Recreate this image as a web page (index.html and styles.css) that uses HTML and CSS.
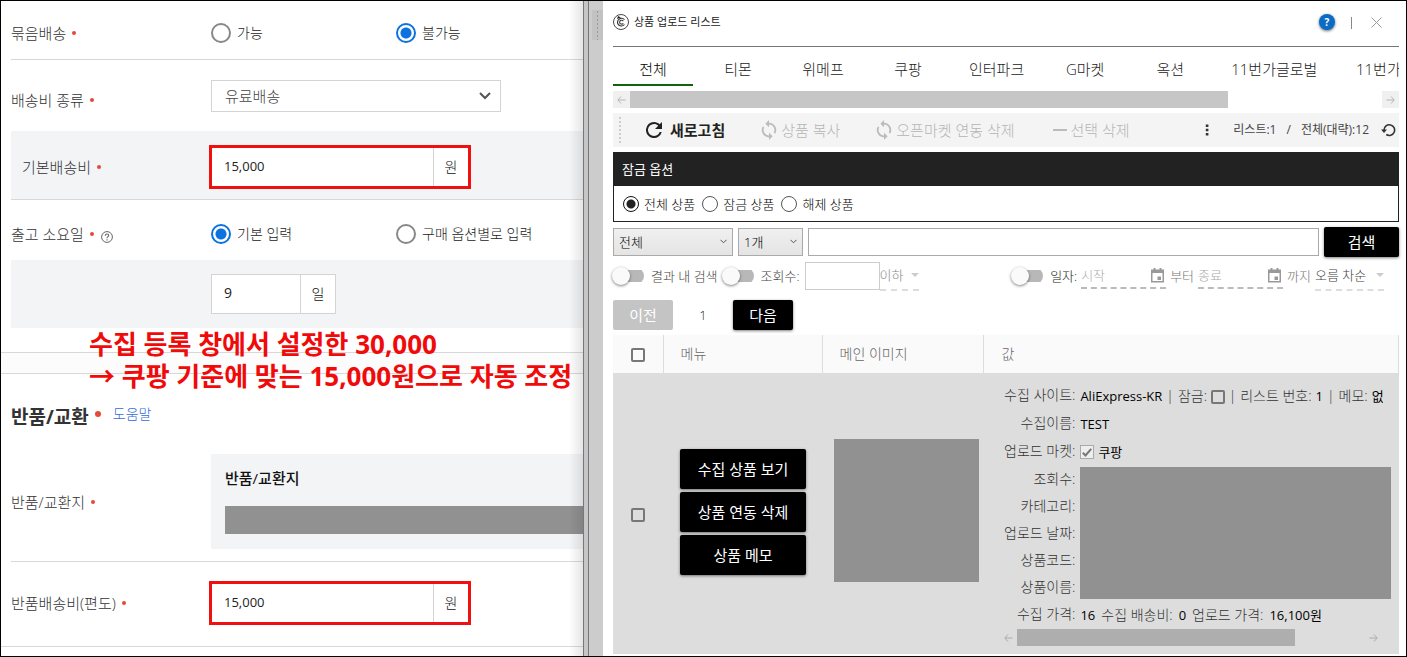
FILE: index.html
```html
<!DOCTYPE html>
<html lang="ko">
<head>
<meta charset="utf-8">
<title>상품 업로드 리스트</title>
<link rel="stylesheet" href="styles.css">
</head>
<body>
<div class="frame">
  <main class="form">
    <div class="row row-bundle">
      <div class="label">묶음배송<i class="dot"></i></div>
      <div class="options">
        <label class="option"><input type="radio" class="radio" name="bundle"><span>가능</span></label>
        <label class="option"><input type="radio" class="radio" name="bundle" checked><span>불가능</span></label>
      </div>
    </div>
    <div class="row row-kind">
      <label class="label" for="kind">배송비 종류<i class="dot"></i></label>
      <div class="kind">
        <select id="kind" class="kind-select"><option>유료배송</option></select>
        <svg class="kind-arrow" width="14" height="10" viewBox="0 0 14 10"><path d="M2 2l5 5 5-5" fill="none" stroke="#555" stroke-width="2"/></svg>
      </div>
    </div>
    <div class="row row-fee">
      <label class="label" for="fee">기본배송비<i class="dot"></i></label>
      <div class="amount marked"><input id="fee" type="text" value="15,000"><span>원</span></div>
    </div>
    <div class="row row-days">
      <div class="label">출고 소요일<i class="dot"></i>
        <svg class="help" width="12" height="12" viewBox="0 0 12 12"><circle cx="6" cy="6" r="5.4" fill="none" stroke="#666"/><path d="M4.3 4.7c0-2.3 3.5-2.2 3.4-.1C7.700 5.700 6 5.700 6 7.200M6 8.200v1.200" fill="none" stroke="#666" stroke-width="1.100"/></svg>
      </div>
      <div class="options">
        <label class="option"><input type="radio" class="radio" name="days" checked><span>기본 입력</span></label>
        <label class="option"><input type="radio" class="radio" name="days"><span>구매 옵션별로 입력</span></label>
      </div>
    </div>
    <div class="row row-count">
      <div class="label"></div>
      <div class="amount short"><input type="text" value="9" aria-label="출고 소요일"><span>일</span></div>
    </div>
    <div class="divider"></div>
    <h2 class="heading">반품/교환<i class="dot big"></i><a href="#">도움말</a></h2>
    <div class="row row-address">
      <div class="label">반품/교환지<i class="dot"></i></div>
      <div class="address"><h3>반품/교환지</h3><div class="mask"></div></div>
    </div>
    <div class="row row-return">
      <label class="label" for="ret">반품배송비(편도)<i class="dot"></i></label>
      <div class="amount marked"><input id="ret" type="text" value="15,000"><span>원</span></div>
    </div>
    <p class="note">수집 등록 창에서 설정한 30,000<br>→ 쿠팡 기준에 맞는 15,000원으로 자동 조정</p>
    <div class="edge-shadow"></div>
  </main>

  <div class="splitter"><div class="rail"></div><div class="grip"></div></div>

  <section class="list">
    <header class="title-bar">
      <svg width="16" height="16" viewBox="0 0 16 16" fill="none" stroke="#333"><circle cx="8" cy="8" r="7.500" stroke-width=".9"/><path d="M11.500 5.600C9.500 3.300 5 4 4.500 8c0 4.300 4.800 5 7 2.500M10.300 7C9 5.700 6.700 6.100 6.600 8.200c.1 2.200 2.600 2.400 3.700 1.100" stroke-width="1.100"/><path d="M4 5l1-3 3 1.500z" fill="#222" stroke="none"/></svg>
      <h1>상품 업로드 리스트</h1>
      <button class="info" aria-label="도움말">?</button>
      <span class="bar"></span>
      <button class="close" aria-label="닫기"><svg width="11" height="11" viewBox="0 0 11 11"><path d="M.5.5l10 10M10.500.5l-10 10" stroke="#999" fill="none"/></svg></button>
    </header>
    <nav class="tabs">
      <button class="tab active">전체</button><button class="tab">티몬</button><button class="tab">위메프</button><button class="tab">쿠팡</button><button class="tab">인터파크</button><button class="tab">G마켓</button><button class="tab">옥션</button><button class="tab">11번가글로벌</button><button class="tab">11번가</button>
    </nav>
    <div class="scroll">
      <button aria-label="왼쪽"><svg width="9" height="8" viewBox="0 0 9 8"><path d="M4 .5L.8 4 4 7.500M1 4h7.500" stroke="#b4b4b4" fill="none"/></svg></button>
      <div class="track"><div class="thumb"></div></div>
      <button aria-label="오른쪽"><svg width="9" height="8" viewBox="0 0 9 8"><path d="M5 .5L8.200 4 5 7.500M8 4H.5" stroke="#b4b4b4" fill="none"/></svg></button>
    </div>
    <div class="toolbar">
      <i class="dots"></i>
      <button class="tool refresh"><svg width="16" height="16" viewBox="4 4 16 16"><path fill="#222" d="M17.650 6.350C16.200 4.900 14.210 4 12 4a8 8 0 1 0 7.730 10h-2.080A6 6 0 1 1 12 6c1.660 0 3.140.690 4.220 1.780L13 11h7V4z"/></svg>새로고침</button>
      <button class="tool copy" disabled><svg width="16" height="20" viewBox="4 1 16 22"><path fill="#bbb" d="M12 4V1L8 5l4 4V6a6 6 0 0 1 5.250 8.800l1.460 1.460A8 8 0 0 0 12 4zm0 14a6 6 0 0 1-5.250-8.800L5.290 7.740A8 8 0 0 0 12 20v3l4-4-4-4z"/></svg>상품 복사</button>
      <button class="tool market" disabled><svg width="16" height="20" viewBox="4 1 16 22"><path fill="#bbb" d="M12 4V1L8 5l4 4V6a6 6 0 0 1 5.250 8.800l1.460 1.460A8 8 0 0 0 12 4zm0 14a6 6 0 0 1-5.250-8.800L5.290 7.740A8 8 0 0 0 12 20v3l4-4-4-4z"/></svg>오픈마켓 연동 삭제</button>
      <button class="tool remove" disabled><svg width="14" height="4" viewBox="0 0 14 4"><path d="M0 2h14" stroke="#bbb" stroke-width="2"/></svg>선택 삭제</button>
      <button class="more" aria-label="더 보기"><svg width="4" height="12" viewBox="0 0 4 12"><path d="M.8.5h2.600v2.600H.8zM.8 4.700h2.600v2.600H.8zM.8 8.900h2.600v2.600H.8z" fill="#333"/></svg></button>
      <span class="count">리스트:1</span><span class="count slash">/</span><span class="count">전체(대략):12</span>
      <button class="reload" aria-label="다시 읽기"><svg width="15" height="14" viewBox="0 0 15 14"><path d="M3 7a5.300 5.300 0 1 1 2.300 4.500" fill="none" stroke="#333" stroke-width="1.600"/><path d="M0 6.500h6L3 10z" fill="#333"/></svg></button>
    </div>
    <fieldset class="lock">
      <legend>잠금 옵션</legend>
      <div class="lock-options">
        <label><input type="radio" class="radio dark" name="lock" checked>전체 상품</label>
        <label><input type="radio" class="radio dark" name="lock">잠금 상품</label>
        <label><input type="radio" class="radio dark" name="lock">해제 상품</label>
      </div>
    </fieldset>
    <div class="search">
      <div class="pick wide"><select aria-label="범위"><option>전체</option></select><svg width="7" height="5" viewBox="0 0 7 5"><path d="M.5.8l3 3 3-3" fill="none" stroke="#555"/></svg></div>
      <div class="pick"><select aria-label="개수"><option>1개</option></select><svg width="7" height="5" viewBox="0 0 7 5"><path d="M.5.8l3 3 3-3" fill="none" stroke="#555"/></svg></div>
      <input type="text" class="query" aria-label="검색어">
      <button class="solid go">검색</button>
    </div>
    <div class="filters">
      <label><input type="checkbox" class="toggle">결과 내 검색</label>
      <label><input type="checkbox" class="toggle">조회수:</label>
      <input type="text" class="views" aria-label="조회수">
      <div class="menu below"><select aria-label="조건" disabled><option>이하</option></select><i></i></div>
      <label class="date-toggle"><input type="checkbox" class="toggle">일자:</label>
      <div class="date"><input type="text" placeholder="시작" aria-label="시작"><svg width="13" height="15" viewBox="0 0 13 15"><path d="M2.500 0h2v1.500h4V0h2v1.500H13V14.500H0V1.500h2.500zM1.500 5v8h10V5z" fill="#999" fill-rule="evenodd"/><path d="M6.500 8.500h3.500v3.500H6.500z" fill="#999"/></svg></div>
      <span class="between">부터</span>
      <div class="date"><input type="text" placeholder="종료" aria-label="종료"><svg width="13" height="15" viewBox="0 0 13 15"><path d="M2.500 0h2v1.500h4V0h2v1.500H13V14.500H0V1.500h2.500zM1.500 5v8h10V5z" fill="#999" fill-rule="evenodd"/><path d="M6.500 8.500h3.500v3.500H6.500z" fill="#999"/></svg></div>
      <span class="between">까지</span>
      <div class="menu order"><select aria-label="정렬"><option>오름 차순</option></select><i></i></div>
    </div>
    <div class="pager"><button class="solid" disabled>이전</button><span>1</span><button class="solid">다음</button></div>
    <table class="grid">
      <colgroup><col class="c-check"><col class="c-menu"><col class="c-image"><col></colgroup>
      <thead><tr><th class="check"><input type="checkbox" class="box" aria-label="모두 선택"></th><th>메뉴</th><th>메인 이미지</th><th class="value-head">값</th></tr></thead>
      <tbody><tr>
        <td class="check"><input type="checkbox" class="box" aria-label="선택"></td>
        <td><div class="actions"><button class="solid">수집 상품 보기</button><button class="solid">상품 연동 삭제</button><button class="solid">상품 메모</button></div></td>
        <td><div class="picture"></div></td>
        <td class="value">
          <div class="details">
            <span class="key">수집 사이트:</span>
            <div class="line"><b>AliExpress-KR</b><span>|</span><label>잠금: <input type="checkbox" class="box"></label><span>|</span><span>리스트 번호:</span><b>1</b><span>|</span><span>메모:</span><b>없음</b></div>
            <span class="key">수집이름:</span><div class="line"><b>TEST</b></div>
            <span class="key">업로드 마켓:</span>
            <label class="line"><span class="tick"><input type="checkbox" checked disabled><svg width="10" height="9" viewBox="0 0 10 9"><path d="M.8 4.800l2.700 2.700L9.200.8" fill="none" stroke="#777" stroke-width="2"/></svg></span><b>쿠팡</b></label>
            <span class="key">조회수:</span><div class="hidden-values"></div>
            <span class="key">카테고리:</span><span class="key">업로드 날짜:</span><span class="key">상품코드:</span><span class="key">상품이름:</span>
            <span class="key">수집 가격:</span><div class="line price"><b>16</b><span>수집 배송비:</span><b>0</b><span>업로드 가격:</span><b>16,100원</b></div>
          </div>
          <div class="scroll inner">
            <button aria-label="왼쪽"><svg width="9" height="8" viewBox="0 0 9 8"><path d="M4 .5L.8 4 4 7.500M1 4h7.500" stroke="#aaa" fill="none"/></svg></button>
            <div class="track"><div class="thumb"></div></div>
            <button aria-label="오른쪽"><svg width="9" height="8" viewBox="0 0 9 8"><path d="M5 .5L8.200 4 5 7.500M8 4H.5" stroke="#aaa" fill="none"/></svg></button>
          </div>
        </td>
      </tr></tbody>
    </table>
  </section>
</div>
</body>
</html>
```
FILE: styles.css
```css
* { box-sizing: border-box; margin: 0; padding: 0; }
body { font: 300 15px/20px "Open Sans", "Noto Sans CJK KR", sans-serif; color: #222; background: #fff; }
button, input, select { font: inherit; color: inherit; border: 0; background: none; appearance: none; outline: 0; border-radius: 0; }
button { display: flex; align-items: center; justify-content: center; white-space: nowrap; }
svg { display: block; flex: none; }

.frame { display: grid; grid-template-columns: minmax(0, 582fr) 20px minmax(0, 803fr); min-height: 100vh; border: 1px solid #000; overflow: hidden; }

/* Shipping form */
.form { position: relative; padding-left: 10px; overflow: hidden; }
.row { display: flex; align-items: center; }
.label { display: flex; align-items: center; flex: none; width: 200px; color: #333; white-space: nowrap; }
.dot { width: 4px; height: 4px; margin-left: 6px; border-radius: 50%; background: #e14b3c; }
.dot.big { width: 6px; height: 6px; }
.help { margin: 6px 0 0 7px; }
.options { display: flex; font-size: 14px; }
.option { display: flex; align-items: center; gap: 6px; width: 185px; white-space: nowrap; }
.radio { flex: none; width: 20px; height: 20px; border: 2px solid #888; border-radius: 50%; background: #fff; }
.radio:checked { border-color: #0b72e0; background: radial-gradient(circle, #0b72e0 5px, #fff 6px); }

.row-bundle { height: 59px; padding-top: 5px; border-bottom: 1px solid #d8d8d8; }
.row-kind { height: 71px; }
.row-kind .label { padding-top: 8px; }
.kind { position: relative; width: 290px; }
.kind-select { display: block; width: 100%; height: 32px; padding: 0 13px; border: 1px solid #d4d4d4; background: #fff; color: #444; font-size: 15px; }
.kind-arrow { position: absolute; right: 9px; top: 11px; }
.row-fee { height: 69px; padding-top: 4px; background: #f2f4f6; border-bottom: 1px solid #d8d8d8; }
.row-fee .label { padding-left: 11px; }
.amount { display: flex; height: 40px; }
.amount input { width: 221px; padding: 0 12px 2px; background: #fff; font-size: 13px; font-weight: 400; color: #222; }
.amount span { display: flex; align-items: center; justify-content: center; width: 35px; background: #fff; border-left: 1px solid #d4d4d4; font-size: 14px; color: #111; }
.marked { height: 38px; margin-left: 1px; outline: 3px solid #f01010; }
.row-days { height: 60px; padding-top: 8px; }
.row-count { height: 68px; background: #f2f4f6; }
.short { border: 1px solid #d4d4d4; }
.short input { width: 88px; font-size: 14px; }
.divider { height: 22px; margin: 24px 0 0 -10px; background: #fcfcfc; border: solid #d8d8d8; border-width: 1px 0; }
.heading { display: flex; align-items: center; height: 80px; padding-top: 6px; font-size: 19px; font-weight: 700; color: #333; }
.heading .dot { margin-bottom: 6px; }
.heading a { margin: 0 0 6px 12px; font-size: 14px; font-weight: 300; color: #2f6bd8; text-decoration: none; }
.row-address { height: 108px; padding-bottom: 12px; border-bottom: 1px solid #d8d8d8; }
.address { flex: 1; height: 95px; padding: 14px 0 0 14px; background: #f2f4f6; }
.address h3 { font-size: 15px; line-height: 20px; font-weight: 500; color: #111; }
.mask { height: 28px; margin-top: 18px; background: #919191; }
.row-return { height: 85px; margin-left: -10px; padding: 0 0 2px 10px; border-bottom: 1px solid #d8d8d8; }
.note { position: absolute; left: 88px; top: 327px; font-size: 26px; line-height: 32px; font-weight: 700; color: #f00a0a; white-space: nowrap; }
.edge-shadow { position: absolute; top: 0; right: 0; bottom: 0; width: 14px; background: linear-gradient(90deg, transparent, rgba(0, 0, 0, .1)); }

/* Splitter */
.splitter { position: relative; display: flex; background: #ccc; }
.rail { width: 6px; background: #c6c6c6; border: solid #777; border-width: 0 1px; }
.grip { position: absolute; left: 9px; top: 9px; width: 11px; height: 30px; background: radial-gradient(circle, #999 1px, transparent 1px) 0 0 / 100% 4px #c2c2c2; }

/* Upload list */
.list { min-width: 0; padding: 0 7px 1px 10px; }
.title-bar { display: flex; align-items: center; height: 46px; padding-bottom: 3px; border-bottom: 1px solid #777; }
h1 { margin: 0 auto 0 5px; font-size: 11px; font-weight: 400; }
.info { width: 16px; height: 16px; border-radius: 50%; background: #0a6cc4; box-shadow: 0 1px 3px #666; color: #fff; font-size: 10px; font-weight: 700; }
.bar { width: 1px; height: 12px; margin: 2px 19px 0 16px; background: #888; }
.close { margin-right: 17px; }
.tabs { display: flex; gap: 5px; height: 39px; overflow: hidden; }
.tab { flex: none; min-width: 80px; padding: 7px 16px 0; border-bottom: 2px solid transparent; }
.tab.active { border-color: #0f6412; color: #000; }
.scroll { display: flex; height: 17px; margin-top: 5px; }
.scroll button { width: 17px; background: #f0f0f0; }
.track { flex: 1; }
.thumb { width: 79.500%; height: 100%; background: #c6c6c6; }
.toolbar { display: flex; align-items: center; height: 34px; margin-top: 5px; padding: 0 3px 0 6px; background: #f4f4f4; }
.dots { width: 2px; height: 26px; background: repeating-linear-gradient(#ccc 0 2px, transparent 2px 4px); }
.tool { gap: 4px; color: #b4b4b4; }
.refresh { gap: 8px; margin-left: 25px; color: #222; font-weight: 700; }
.copy { margin-left: 36px; }
.market { margin-left: 36px; }
.remove { margin-left: 38px; }
.more { margin: 0 24px 0 auto; }
.count { font-size: 12px; font-weight: 400; white-space: nowrap; color: #444; }
.slash { margin: 0 10px; }
.reload { margin-left: 12px; }
.lock { margin-top: 5px; border: 1px solid #222; }
.lock legend { float: left; width: 100%; height: 33px; padding: 0 8px; background: #222; color: #fff; font-size: 13px; line-height: 33px; font-weight: 400; }
.lock-options { clear: both; display: flex; gap: 7px; height: 35px; padding-left: 9px; font-size: 13px; color: #000; }
.lock-options label { display: flex; align-items: center; gap: 5px; white-space: nowrap; }
.radio.dark { width: 16px; height: 16px; border-width: 1px; border-color: #555; }
.radio.dark:checked { border-color: #111; background: radial-gradient(circle, #222 4px, #fff 5px); }
.search { display: flex; align-items: center; gap: 5px; margin-top: 5px; font-size: 13px; }
.pick { position: relative; width: 65px; }
.wide { width: 120px; }
.pick select { display: block; width: 100%; height: 28px; padding: 0 5px; border: 1px solid #aaa; background: linear-gradient(#f0f0f0, #e4e4e4); color: #000; }
.pick svg { position: absolute; right: 6px; top: 11px; }
.query { flex: 1; min-width: 0; height: 28px; border: 1px solid #aaa; }
.solid { height: 30px; border-radius: 2px; background: #000; box-shadow: 0 1px 3px rgba(0, 0, 0, .5); color: #fff; font-size: 15px; font-weight: 400; }
.solid:disabled { background: #c4c4c4; box-shadow: none; }
.go { width: 75px; }
.filters { display: flex; align-items: center; height: 38px; padding-right: 15px; font-size: 13px; white-space: nowrap; color: #444; }
.filters label { display: flex; align-items: center; gap: 7px; margin-right: 5px; }
.toggle { position: relative; width: 31px; height: 18px; background: linear-gradient(#b8b8b8, #b8b8b8) 8px 3px / 23px 12px no-repeat; border-radius: 9px; }
.toggle::before { content: ""; position: absolute; left: -1px; top: 0; width: 18px; height: 18px; border-radius: 50%; background: #fafafa; box-shadow: 0 1px 3px rgba(0, 0, 0, .5); }
.views { width: 75px; height: 28px; border: 1px solid #ccc; }
.menu { display: flex; align-items: center; justify-content: space-between; height: 29px; border-bottom: 2px dashed #ddd; }
.menu i { border: solid transparent; border-width: 4px 4px 0; border-top-color: #ccc; }
.below { width: 39px; color: #888; }
.menu select { opacity: 1; }
.order { width: 69px; }
.filters .date-toggle { margin: 0 4px 0 auto; color: #222; }
.date { display: flex; align-items: center; width: 85px; height: 25px; border-bottom: 2px dashed #bbb; }
.date input { flex: 1; min-width: 0; }
.date input::placeholder { color: #aaa; }
.date svg { margin-right: 2px; }
.between { margin: 0 4px; color: #777; }
.pager { display: flex; align-items: center; margin: 5px 0; }
.pager .solid { width: 60px; }
.pager span { width: 60px; text-align: center; font-size: 13px; }

/* Result table */
.grid { width: 100%; table-layout: fixed; border-collapse: collapse; font-size: 14px; }
.c-check { width: 50px; }
.c-menu { width: 159px; }
.c-image { width: 161px; }
th { height: 38px; padding: 0 17px; background: #fafafa; border-right: 1px solid #ddd; text-align: left; font-weight: 300; color: #666; }
td { background: #ddd; vertical-align: middle; }
.grid .check { padding: 0; text-align: center; }
.box { width: 14px; height: 14px; border: 2px solid #777; border-radius: 2px; vertical-align: middle; }
.actions { display: grid; gap: 3px; width: 126px; margin: 0 auto 4px 17px; }
.actions .solid { height: 40px; }
.picture { height: 143px; margin: 0 4px 6px 12px; background: #919191; }
.value { padding: 8px 8px 8px 21px; }
.details { display: grid; grid-template-columns: max-content minmax(0, 1fr); grid-template-rows: repeat(3, 28px) repeat(6, 27px); column-gap: 5px; align-items: center; color: #333; }
.key { grid-column: 1; justify-self: end; }
.line { display: flex; align-items: center; gap: 4px; overflow: hidden; white-space: nowrap; padding: 2px 0 0; margin-right: 8px; }
.line b { font-size: 13px; font-weight: 400; color: #000; }
.price { gap: 6px; }
.hidden-values { grid-column: 2; grid-row: 4 / 9; height: 132px; background: #919191; }
.tick { position: relative; }
.tick input { display: block; width: 14px; height: 14px; border: 1px solid #aaa; background: #eee; }
.tick svg { position: absolute; left: 2px; top: 3px; }
.inner { margin: 2px 9px 0 -4px; }
.inner button { background: none; }
.inner .thumb { width: 80%; background: #aeaeae; }
.grid .value-head { padding-left: 18px; }
```
